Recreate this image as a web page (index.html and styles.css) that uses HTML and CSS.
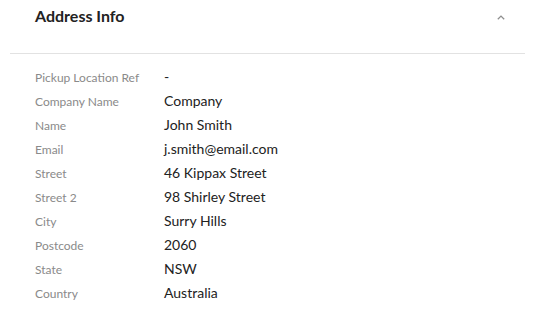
FILE: index.html
```html
<!DOCTYPE html>
<html lang="en">
<head>
  <meta charset="UTF-8">
  <meta name="viewport" content="width=device-width, initial-scale=1.0">
  <title>Address Info</title>
  <link rel="stylesheet" href="styles.css">
</head>
<body>

  <div class="panel">
    <div class="panel-header">
      <h2>Address Info</h2>
      <button class="toggle" aria-label="Collapse">
        <svg width="8" height="5" viewBox="0 0 8 5">
          <path d="M0.8 4.3 L4 1.1 L7.2 4.3" fill="none" stroke="#8f8f8f" stroke-width="1.3"/>
        </svg>
      </button>
    </div>

    <div class="details">
      <div class="row"><span class="label">Pickup Location Ref</span><span class="value">-</span></div>
      <div class="row"><span class="label">Company Name</span><span class="value">Company</span></div>
      <div class="row"><span class="label">Name</span><span class="value">John Smith</span></div>
      <div class="row"><span class="label">Email</span><span class="value">j.smith@email.com</span></div>
      <div class="row"><span class="label">Street</span><span class="value">46 Kippax Street</span></div>
      <div class="row"><span class="label">Street 2</span><span class="value">98 Shirley Street</span></div>
      <div class="row"><span class="label">City</span><span class="value">Surry Hills</span></div>
      <div class="row"><span class="label">Postcode</span><span class="value">2060</span></div>
      <div class="row"><span class="label">State</span><span class="value">NSW</span></div>
      <div class="row"><span class="label">Country</span><span class="value">Australia</span></div>
    </div>
  </div>

</body>
</html>
```

FILE: styles.css
```css
body {
  font-family: Lato, "Open Sans", sans-serif;
  background-color: #fff;
  color: #222;
  margin: 0;
}
.panel {
  margin: 0 9px 0 10px;
}
.panel-header {
  display: flex;
  justify-content: space-between;
  align-items: flex-start;
  padding: 6px 20px 27px 25px;
  border-bottom: 1px solid #e2e2e2;
}
.panel-header h2 {
  margin: 0;
  font-size: 16px;
  line-height: 20px;
  font-weight: 700;
  color: #222;
}
.toggle {
  background: none;
  border: none;
  padding: 0;
  margin-top: 9px;
  cursor: pointer;
  line-height: 0;
}
.details {
  padding: 11px 25px 0;
}
.row {
  display: flex;
  align-items: baseline;
  height: 24px;
  line-height: 24px;
}
.label {
  width: 129px;
  flex-shrink: 0;
  font-size: 12px;
  color: #8a8a8a;
}
.value {
  font-size: 14px;
  color: #222;
}
```
